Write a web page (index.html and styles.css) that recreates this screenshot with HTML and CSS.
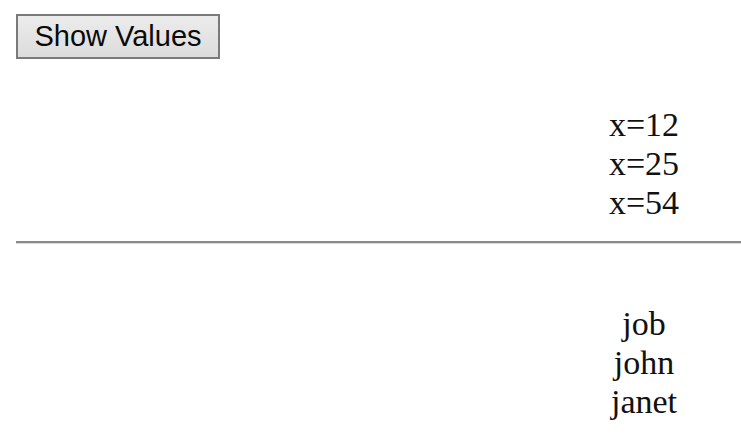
FILE: index.html
```html
<!DOCTYPE html>
<html>
<head>
<meta charset="utf-8">
<link rel="stylesheet" href="styles.css">
</head>
<body>
<div class="page">
  <button class="btn">Show Values</button>
  <div class="block values">
    <div class="col">
      <div>x=12</div>
      <div>x=25</div>
      <div>x=54</div>
    </div>
  </div>
  <hr class="rule">
  <div class="block names">
    <div class="col">
      <div>job</div>
      <div>john</div>
      <div>janet</div>
    </div>
  </div>
</div>
</body>
</html>
```
FILE: styles.css
```css
html, body {
  margin: 0;
  padding: 0;
  background: #ffffff;
  overflow: hidden;
}
.page {
  padding: 14px 0 0 16px;
  width: 760px;
}
.btn {
  display: block;
  margin: 0;
  width: 204px;
  height: 45px;
  padding: 0;
  font-family: "Liberation Sans", Arial, sans-serif;
  font-size: 29px;
  color: #0a0a0a;
  background: linear-gradient(#ececec, #dcdcdc);
  border: 2px solid #7a7a7a;
  border-radius: 0;
}
.block {
  display: flex;
  font-family: "Liberation Serif", "Times New Roman", serif;
  font-size: 34px;
  line-height: 39px;
  color: #111111;
}
.col {
  width: 200px;
  margin-left: 528px;
  text-align: center;
}
.values {
  margin-top: 46px;
}
.rule {
  margin: 19px 0 0 0;
  height: 0;
  border: none;
  border-top: 2px solid #8a8a8a;
  border-bottom: 1px solid #d8d8d8;
}
.names {
  margin-top: 60px;
}
```
